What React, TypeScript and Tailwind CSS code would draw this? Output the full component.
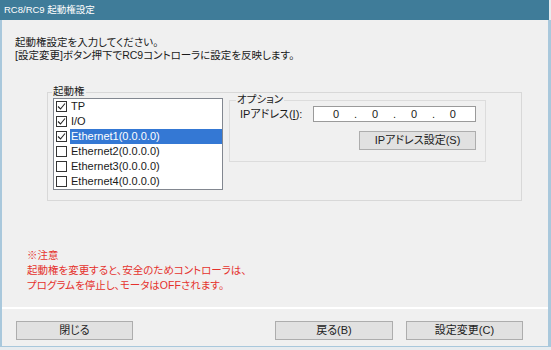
const FONT = "font-['Liberation_Sans','Noto_Sans_CJK_JP',sans-serif] [font-feature-settings:'palt']";

function Check({ checked }: { checked: boolean }) {
  return (
    <span className="flex h-[11px] w-[11px] shrink-0 items-center justify-center border border-[#333333] bg-white">
      {checked && (
        <svg width="9" height="9" viewBox="0 0 9 9" fill="none">
          <path d="M1 4.5 L3.5 7 L8 1.5" stroke="#222222" strokeWidth="1.1" />
        </svg>
      )}
    </span>
  );
}

function WinButton({ label, className = "" }: { label: string; className?: string }) {
  return (
    <button
      type="button"
      className={`flex items-center justify-center border border-[#adadad] bg-[#e1e1e1] text-[11px] leading-none text-[#222222] ${className}`}
    >
      {label}
    </button>
  );
}

const items = [
  { label: "TP", checked: true },
  { label: "I/O", checked: true },
  { label: "Ethernet1(0.0.0.0)", checked: true, selected: true },
  { label: "Ethernet2(0.0.0.0)", checked: false },
  { label: "Ethernet3(0.0.0.0)", checked: false },
  { label: "Ethernet4(0.0.0.0)", checked: false },
];

export default function App() {
  return (
    <div className={`flex h-[350px] w-[551px] flex-col bg-[#e8ecef] ${FONT}`}>
      {/* Title bar */}
      <div className="flex h-[20px] w-[549px] items-center bg-[#3f7c99] pl-[4px] text-[9.5px] text-white">
        RC8/RC9 起動権設定
      </div>

      {/* Body */}
      <div className="flex h-[327px] w-[551px] flex-col border-b-[1px] border-l-[2px] border-r-[3px] border-[#a9c8dc] bg-[#f0f0f0] text-[#1a1a1a]">
        <div className="ml-[13px] mt-[16px] text-[10.5px] leading-[13px]">
          <div>起動権設定を入力してください。</div>
          <div>[設定変更]ボタン押下でRC9コントローラに設定を反映します。</div>
        </div>

        {/* Group box */}
        <div className="relative ml-[45px] mt-[30px] flex h-[109px] w-[475px] items-start gap-[6px] border border-[#d8d8d8] pl-[5px] pt-[5px]">
          <span className="absolute left-[4px] top-[-8px] bg-[#f0f0f0] px-[1px] text-[10.5px] leading-[13px]">
            起動権
          </span>

          {/* List */}
          <div className="flex h-[92px] w-[170px] flex-col border border-[#828790] bg-white">
            {items.map((it) => (
              <div key={it.label} className="flex h-[15px] items-center pl-[2px]">
                <Check checked={it.checked} />
                <span
                  className={`ml-[3px] flex h-[15px] flex-1 items-center pl-[1px] text-[11px] leading-none ${
                    it.selected ? "bg-[#3478d4] text-white" : "text-[#1a1a1a]"
                  }`}
                >
                  {it.label}
                </span>
              </div>
            ))}
          </div>

          {/* Option group */}
          <div className="relative mt-[2px] flex h-[62px] w-[257px] flex-col border border-[#dcdcdc]">
            <span className="absolute left-[6px] top-[-8px] bg-[#f0f0f0] px-[1px] text-[10.5px] leading-[13px]">
              オプション
            </span>
            <div className="ml-[10px] mt-[5px] flex items-center">
              <span className="w-[70px] text-[11px] leading-[13px]">
                IPアドレス(<span className="underline">I</span>):
              </span>
              <div className="ml-[3px] flex h-[16px] w-[163px] items-center justify-between border border-[#9a9a9a] bg-white pl-[19px] pr-[19px] text-[11px] leading-none">
                <span>0</span>
                <span>.</span>
                <span>0</span>
                <span>.</span>
                <span>0</span>
                <span>.</span>
                <span>0</span>
              </div>
            </div>
            <div className="mr-[9px] mt-[9px] flex justify-end">
              <WinButton label="IPアドレス設定(S)" className="h-[19px] w-[117px]" />
            </div>
          </div>
        </div>

        {/* Warning */}
        <div className="ml-[25px] mt-[47px] text-[10.5px] leading-[15px] text-[#e5322d]">
          <div>※注意</div>
          <div>起動権を変更すると、安全のためコントローラは、</div>
          <div>プログラムを停止し、モータはOFFされます。</div>
        </div>

        {/* Separator */}
        <div className="mt-[14px] h-[2px] w-full bg-white" />

        {/* Buttons */}
        <div className="mt-[12px] flex items-center pl-[14px] pr-[25px]">
          <WinButton label="閉じる" className="h-[19px] w-[117px]" />
          <div className="flex-1" />
          <WinButton label="戻る(B)" className="h-[19px] w-[118px]" />
          <WinButton label="設定変更(C)" className="ml-[13px] h-[19px] w-[117px]" />
        </div>
      </div>
    </div>
  );
}
